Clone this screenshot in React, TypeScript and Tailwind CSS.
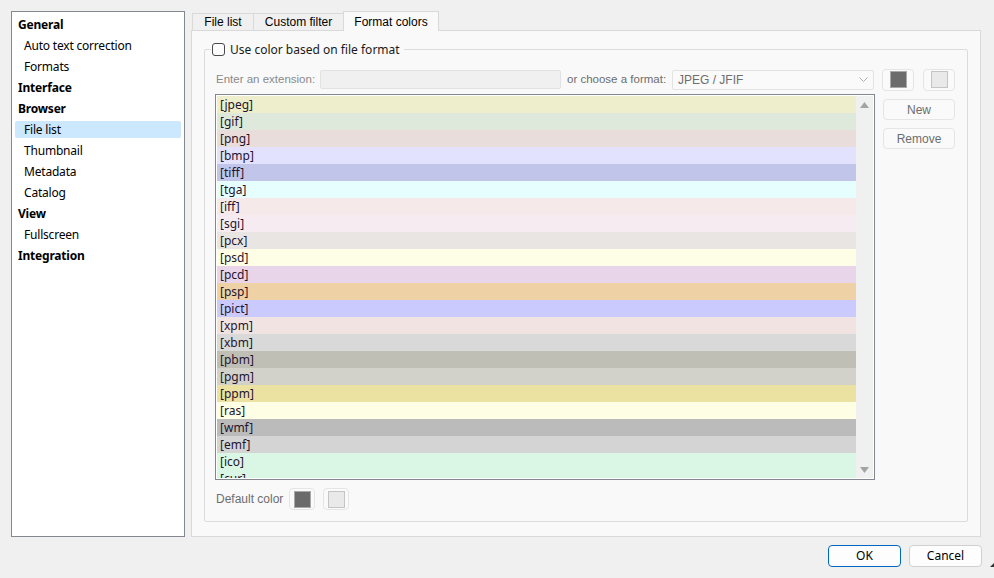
import React from 'react';

// Preferences dialog – Browser > File list > Format colors

const navItems: { label: string; bold?: boolean; selected?: boolean }[] = [
  { label: 'General', bold: true },
  { label: 'Auto text correction' },
  { label: 'Formats' },
  { label: 'Interface', bold: true },
  { label: 'Browser', bold: true },
  { label: 'File list', selected: true },
  { label: 'Thumbnail' },
  { label: 'Metadata' },
  { label: 'Catalog' },
  { label: 'View', bold: true },
  { label: 'Fullscreen' },
  { label: 'Integration', bold: true },
];

// extension + full background class (kept literal so tailwind picks them up)
const formats: [string, string][] = [
  ['jpeg', 'bg-[#eeeecc]'],
  ['gif', 'bg-[#dee9dc]'],
  ['png', 'bg-[#e8ddda]'],
  ['bmp', 'bg-[#e2e2fe]'],
  ['tiff', 'bg-[#c1c5ea]'],
  ['tga', 'bg-[#e6fefe]'],
  ['iff', 'bg-[#f6e9e9]'],
  ['sgi', 'bg-[#f6ebf1]'],
  ['pcx', 'bg-[#e9e5e3]'],
  ['psd', 'bg-[#fefee6]'],
  ['pcd', 'bg-[#e9d5e9]'],
  ['psp', 'bg-[#eed1a5]'],
  ['pict', 'bg-[#cacafe]'],
  ['xpm', 'bg-[#f2e3e3]'],
  ['xbm', 'bg-[#d9d9d9]'],
  ['pbm', 'bg-[#bfbfb5]'],
  ['pgm', 'bg-[#d2d2cb]'],
  ['ppm', 'bg-[#ebe1a1]'],
  ['ras', 'bg-[#fefee5]'],
  ['wmf', 'bg-[#bbbbbb]'],
  ['emf', 'bg-[#d4d4d4]'],
  ['ico', 'bg-[#d9f7e4]'],
  ['cur', 'bg-[#d9f7e4]'],
];

const ui = { fontFamily: '"Segoe UI", "Noto Sans", Arial, sans-serif' };
const pixel = { fontFamily: '"Liberation Sans", Arial, sans-serif' };

const SwatchButton = ({ dark, wide }: { dark?: boolean; wide?: boolean }) => (
  <div
    className={`${wide ? 'w-[32px]' : 'w-[26px]'} shrink-0 h-[22px] rounded-[4px] border border-[#e5e5e5] bg-[#fafafa] flex items-center justify-center`}
  >
    <div
      className={
        dark
          ? 'w-[17px] h-[17px] bg-[#6b6b6b] border border-[#a8a8a8]'
          : 'w-[17px] h-[17px] bg-[#e9e9e9] border border-[#c4c4c4]'
      }
    />
  </div>
);

const Tab = ({ label, width, active }: { label: string; width: string; active?: boolean }) => (
  <div
    className={
      active
        ? `${width} h-[20px] -mb-px relative z-10 bg-[#f9f9f9] border border-b-0 border-[#d9d9d9] flex items-center justify-center text-[12px] text-black`
        : `${width} h-[17px] bg-[#f0f0f0] border border-b-0 border-r-0 border-[#d9d9d9] flex items-center justify-center text-[12px] text-black`
    }
    style={pixel}
  >
    {label}
  </div>
);

const App = () => {
  return (
    <div className="w-[994px] h-[578px] bg-[#f0f0f0] flex flex-col overflow-hidden select-none" style={ui}>
      <div className="flex pt-[11px] pl-[11px] gap-[6px]">
        {/* Tree of settings pages */}
        <div className="w-[174px] h-[526px] bg-white border border-[#828790] pt-[2px] px-[3px]">
          {navItems.map((item) => (
            <div key={item.label} className="h-[21px] py-[2px]">
              <div
                className={`h-[17px] rounded-[2px] flex items-center text-[12px] tracking-[-0.2px] text-black ${
                  item.selected ? 'bg-[#cce8ff]' : ''
                } ${item.bold ? 'font-bold pl-[3px]' : 'pl-[9px]'}`}
              >
                {item.label}
              </div>
            </div>
          ))}
        </div>

        {/* Tab widget */}
        <div className="w-[790px] flex flex-col">
          <div className="h-[19px] flex items-end pl-[1px]">
            <Tab label="File list" width="w-[61px]" />
            <Tab label="Custom filter" width="w-[90px]" />
            <Tab label="Format colors" width="w-[96px]" active />
          </div>
          <div className="h-[507px] bg-[#f9f9f9] border border-[#d9d9d9] pt-[18px] pl-[12px]">
            {/* Group box */}
            <div className="relative w-[764px] h-[473px] border border-[#dcdcdc] rounded-[2px] pt-[18px] pl-[11px]">
              <div className="absolute left-[6px] -top-[8px] flex items-center gap-[5px] bg-[#f9f9f9] pl-[1px] pr-[4px] h-[15px]">
                <div className="w-[13px] h-[13px] rounded-[3px] border border-[#4a4a4a] bg-[#fbfbfb]" />
                <span className="text-[12px] text-[#1a1a1a]">Use color based on file format</span>
              </div>

              {/* Extension / format row */}
              <div className="flex items-center h-[23px]" style={pixel}>
                <span className="w-[104px] shrink-0 whitespace-nowrap text-[11.5px] text-[#8a8a8a]">Enter an extension:</span>
                <div className="w-[241px] shrink-0 h-[19px] bg-[#f0f0f0] border border-[#e2e2e2] rounded-[2px]" />
                <span className="w-[111px] shrink-0 whitespace-nowrap pl-[6px] text-[11.5px] text-[#6d6d6d]">or choose a format:</span>
                <div className="w-[202px] shrink-0 h-[20px] bg-[#fafafa] border border-[#e3e3e3] rounded-[2px] flex items-center justify-between pl-[5px] pr-[5px]">
                  <span className="text-[12px] text-[#6d6d6d]">JPEG / JFIF</span>
                  <svg width="9" height="6" viewBox="0 0 9 6">
                    <polyline points="0.5,0.5 4.5,4.5 8.5,0.5" fill="none" stroke="#b0b0b0" strokeWidth="1" />
                  </svg>
                </div>
                <div className="ml-[8px] flex gap-[9px]">
                  <SwatchButton dark wide />
                  <SwatchButton wide />
                </div>
              </div>

              {/* List + side buttons */}
              <div className="flex mt-[3px] -ml-px">
                <div className="w-[660px] shrink-0 h-[386px] border border-[#828790] bg-white flex p-px">
                  <div className="flex-1 overflow-hidden">
                    {formats.map(([ext, bg]) => (
                      <div key={ext} className={`h-[17px] flex items-center pl-[3px] text-[12px] text-[#24142e] ${bg}`}>
                        [{ext}]
                      </div>
                    ))}
                  </div>
                  <div className="w-[17px] bg-[#f0f0f0] flex flex-col justify-between items-center pt-[6px] pb-[5px]">
                    <svg width="9" height="6" viewBox="0 0 9 6">
                      <polygon points="4.5,0 9,6 0,6" fill="#a3a3a3" />
                    </svg>
                    <svg width="9" height="6" viewBox="0 0 9 6">
                      <polygon points="0,0 9,0 4.5,6" fill="#a3a3a3" />
                    </svg>
                  </div>
                </div>
                <div className="ml-[8px] pt-[5px] flex flex-col gap-[8px]" style={pixel}>
                  <div className="w-[72px] h-[21px] rounded-[4px] border border-[#e5e5e5] bg-[#fafafa] flex items-center justify-center text-[12px] text-[#6d6d6d]">
                    New
                  </div>
                  <div className="w-[72px] h-[21px] rounded-[4px] border border-[#e5e5e5] bg-[#fafafa] flex items-center justify-center text-[12px] text-[#6d6d6d]">
                    Remove
                  </div>
                </div>
              </div>

              {/* Default color */}
              <div className="flex items-center h-[22px] mt-[8px]" style={pixel}>
                <span className="w-[73px] shrink-0 whitespace-nowrap text-[12px] text-[#6d6d6d]">Default color</span>
                <div className="flex gap-[8px]">
                  <SwatchButton dark />
                  <SwatchButton />
                </div>
              </div>
            </div>
          </div>
        </div>
      </div>

      {/* Dialog buttons */}
      <div className="relative flex justify-end gap-[8px] pt-[8px] pr-[12px]">
        <div className="w-[73px] h-[22px] rounded-[4px] border border-[#0067c0] bg-[#fdfdfd] flex items-center justify-center text-[12px] text-black">
          OK
        </div>
        <div className="w-[73px] h-[22px] rounded-[4px] border border-[#d0d0d0] bg-[#fdfdfd] flex items-center justify-center text-[12px] text-black">
          Cancel
        </div>
        <svg className="absolute right-0 top-[26px]" width="4" height="4" viewBox="0 0 4 4">
          <polygon points="4,0 4,4 0,4" fill="#333" />
        </svg>
      </div>
    </div>
  );
};

export default App;
